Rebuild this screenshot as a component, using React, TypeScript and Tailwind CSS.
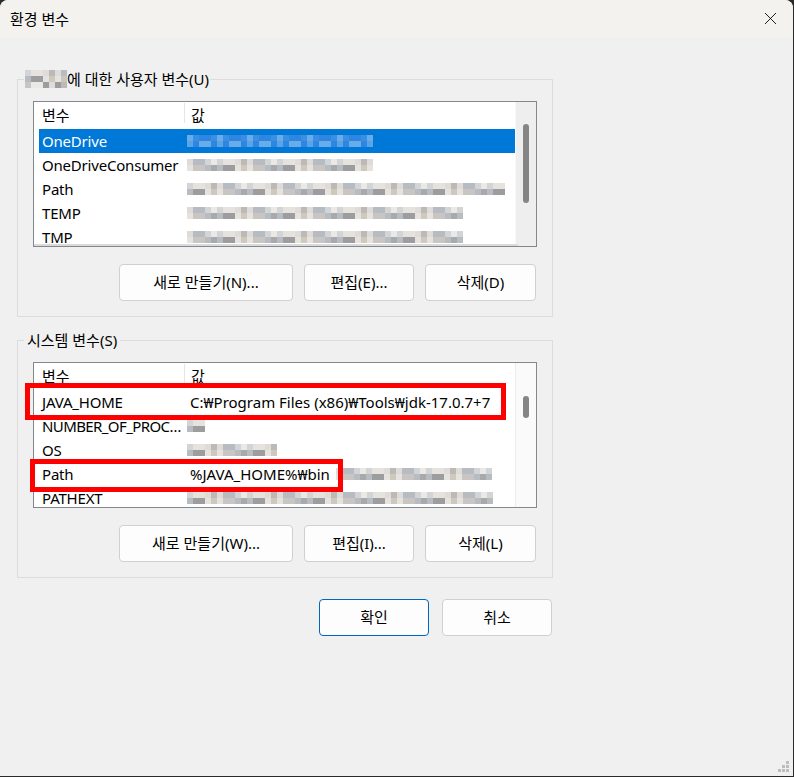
import { X } from "lucide-react";

const GRAY = [
  "bg-[#dedbd8]",
  "bg-[#c9c5c2]",
  "bg-[#a9a8aa]",
  "bg-[#e6e3df]",
  "bg-[#bcb9b6]",
  "bg-[#d2d4d6]",
  "bg-[#9d9c9e]",
  "bg-[#cfc8bd]",
  "bg-[#b6bcc2]",
  "bg-[#ebe9e6]",
];
const BLUE = [
  "bg-[#2d86df]",
  "bg-[#4a98e4]",
  "bg-[#1f7ddb]",
  "bg-[#6aacea]",
  "bg-[#3b8fe1]",
  "bg-[#0f79d9]",
  "bg-[#5aa3e7]",
];

// 모자이크 처리된 값
function Blur({ n, seed = 1, rows = 2, blue = false }: { n: number; seed?: number; rows?: number; blue?: boolean }) {
  const pal = blue ? BLUE : GRAY;
  return (
    <div className="flex flex-col">
      {Array.from({ length: rows }).map((_, r) => (
        <div key={r} className="flex">
          {Array.from({ length: n }).map((_, i) => (
            <span key={i} className={`w-[6px] h-[6px] ${pal[(i * 7 + r * 3 + seed * 5 + ((i * i) % 5)) % pal.length]}`} />
          ))}
        </div>
      ))}
    </div>
  );
}

type RowProps = { name: string; sel?: boolean; tight?: boolean; children?: React.ReactNode };

function Row({ name, sel, tight, children }: RowProps) {
  return (
    <div className={`ml-[5px] h-[24px] shrink-0 flex items-center ${sel ? "bg-[#0078d7] text-white" : ""}`}>
      <div
        className={`w-[145px] pl-[3px] whitespace-nowrap overflow-hidden ${tight ? "tracking-[-0.6px]" : "tracking-[-0.2px]"}`}
      >
        {name}
      </div>
      <div className="flex-1 flex items-center whitespace-nowrap overflow-hidden">{children}</div>
    </div>
  );
}

function Header() {
  return (
    <div className="ml-[5px] h-[27px] shrink-0 flex items-center">
      <div className="w-[145px] pl-[3px]">변수</div>
      <div className="w-px h-[20px] bg-[#e5e5e5] self-start mt-[1px]" />
      <div className="pl-[6px]">값</div>
    </div>
  );
}

function Btn({ label, w, primary }: { label: string; w: string; primary?: boolean }) {
  return (
    <button
      className={`${w} h-[37px] rounded-[4px] bg-[#fdfdfd] border text-[15px] text-black ${
        primary ? "border-[#0067c0]" : "border-[#d0d0d0]"
      }`}
    >
      {label}
    </button>
  );
}

function Grip() {
  return (
    <svg width="12" height="12" viewBox="0 0 12 12" className="absolute right-[3px] bottom-[3px]">
      <rect x="8" y="0" width="3" height="3" fill="#bdbdbd" />
      <rect x="4" y="4" width="3" height="3" fill="#bdbdbd" />
      <rect x="8" y="4" width="3" height="3" fill="#bdbdbd" />
      <rect x="0" y="8" width="3" height="3" fill="#bdbdbd" />
      <rect x="4" y="8" width="3" height="3" fill="#bdbdbd" />
      <rect x="8" y="8" width="3" height="3" fill="#bdbdbd" />
    </svg>
  );
}

export default function App() {
  return (
    <div className="w-[794px] h-[777px] bg-[#2a2a2a] font-['Noto_Sans','Noto_Sans_CJK_KR',sans-serif] text-[15px] text-black">
      <div className="relative w-[793px] h-[776px] rounded-t-[8px] overflow-hidden bg-[#f0f0f0] flex flex-col">
        {/* 제목 표시줄 */}
        <div className="h-[37px] shrink-0 bg-[#f3f2ef] flex items-center justify-between">
          <span className="pl-[10px] leading-[20px]">환경 변수</span>
          <div className="w-[46px] h-[37px] flex items-center justify-center">
            <X size={21} strokeWidth={1} />
          </div>
        </div>

        <div className="pl-[17px] pt-[32px] flex flex-col">
          {/* 사용자 변수 */}
          <fieldset className="w-[536px] border border-[#dcdcdc] p-0 m-0">
            <legend className="ml-[6px] px-[1px] leading-[20px] flex items-center">
              <Blur n={7} rows={3} seed={3} />
              <span>에 대한 사용자 변수(U)</span>
            </legend>
            <div className="pl-[15px] pr-[15px] pt-[12px] pb-[15px]">
              <div className="w-[504px] h-[146px] border border-[#828790] bg-white overflow-hidden flex">
                <div className="flex-1 min-w-0 flex flex-col relative">
                  <Header />
                  <Row name="OneDrive" sel>
                    <div className="pl-[3px]">
                      <Blur n={31} seed={2} blue />
                    </div>
                  </Row>
                  <Row name="OneDriveConsumer">
                    <div className="pl-[3px]">
                      <Blur n={31} seed={4} />
                    </div>
                  </Row>
                  <Row name="Path">
                    <div className="pl-[3px]">
                      <Blur n={53} seed={5} />
                    </div>
                  </Row>
                  <Row name="TEMP">
                    <div className="pl-[3px]">
                      <Blur n={46} seed={6} />
                    </div>
                  </Row>
                  <Row name="TMP">
                    <div className="pl-[3px]">
                      <Blur n={46} seed={6} />
                    </div>
                  </Row>
                  <div className="absolute left-0 right-[-3px] bottom-0 h-[2px] bg-[#dadada]" />
                </div>
                <div className="w-[21px] shrink-0 bg-[#eeeeee] border-l border-[#f8f8f8] pt-[22px] flex justify-center">
                  <div className="w-[6px] h-[79px] rounded-full bg-[#858585]" />
                </div>
              </div>
              <div className="mt-[17px] pr-[1px] flex justify-end gap-[11px]">
                <Btn label="새로 만들기(N)..." w="w-[174px]" />
                <Btn label="편집(E)..." w="w-[110px]" />
                <Btn label="삭제(D)" w="w-[111px]" />
              </div>
            </div>
          </fieldset>

          {/* 시스템 변수 */}
          <fieldset className="mt-[13px] w-[536px] border border-[#dcdcdc] p-0 m-0">
            <legend className="ml-[6px] px-[3px] leading-[20px]">시스템 변수(S)</legend>
            <div className="pl-[15px] pr-[15px] pt-[12px] pb-[15px]">
              <div className="relative w-[504px] h-[146px]">
                <div className="w-[504px] h-[146px] border border-[#828790] bg-white overflow-hidden flex">
                  <div className="flex-1 min-w-0 flex flex-col">
                    <Header />
                    <Row name="JAVA_HOME">
                      <span className="pl-[6px]">C:₩Program Files (x86)₩Tools₩jdk-17.0.7+7</span>
                    </Row>
                    <Row name="NUMBER_OF_PROC…" tight>
                      <div className="pl-[3px]">
                        <Blur n={3} seed={1} />
                      </div>
                    </Row>
                    <Row name="OS">
                      <div className="pl-[3px]">
                        <Blur n={15} seed={7} />
                      </div>
                    </Row>
                    <Row name="Path">
                      <span className="pl-[6px]">%JAVA_HOME%₩bin</span>
                      <div className="pl-[6px]">
                        <Blur n={26} seed={8} />
                      </div>
                    </Row>
                    <Row name="PATHEXT">
                      <div className="pl-[3px]">
                        <Blur n={51} seed={9} />
                      </div>
                    </Row>
                  </div>
                  <div className="w-[21px] shrink-0 bg-[#fafafa] border-l border-[#ececec] pt-[33px] flex justify-center">
                    <div className="w-[6px] h-[22px] rounded-full bg-[#858585]" />
                  </div>
                </div>
                {/* 강조 표시 */}
                <div className="absolute left-[-8px] top-[21px] w-[481px] h-[37px] border-[5px] border-[#ff0000]" />
                <div className="absolute left-[-3px] top-[97px] w-[313px] h-[33px] border-[5px] border-[#ff0000]" />
              </div>
              <div className="mt-[17px] pr-[1px] flex justify-end gap-[11px]">
                <Btn label="새로 만들기(W)..." w="w-[174px]" />
                <Btn label="편집(I)..." w="w-[110px]" />
                <Btn label="삭제(L)" w="w-[111px]" />
              </div>
            </div>
          </fieldset>

          <div className="mt-[21px] w-[535px] flex justify-end gap-[13px]">
            <Btn label="확인" w="w-[110px]" primary />
            <Btn label="취소" w="w-[110px]" />
          </div>
        </div>
        <Grip />
      </div>
    </div>
  );
}
